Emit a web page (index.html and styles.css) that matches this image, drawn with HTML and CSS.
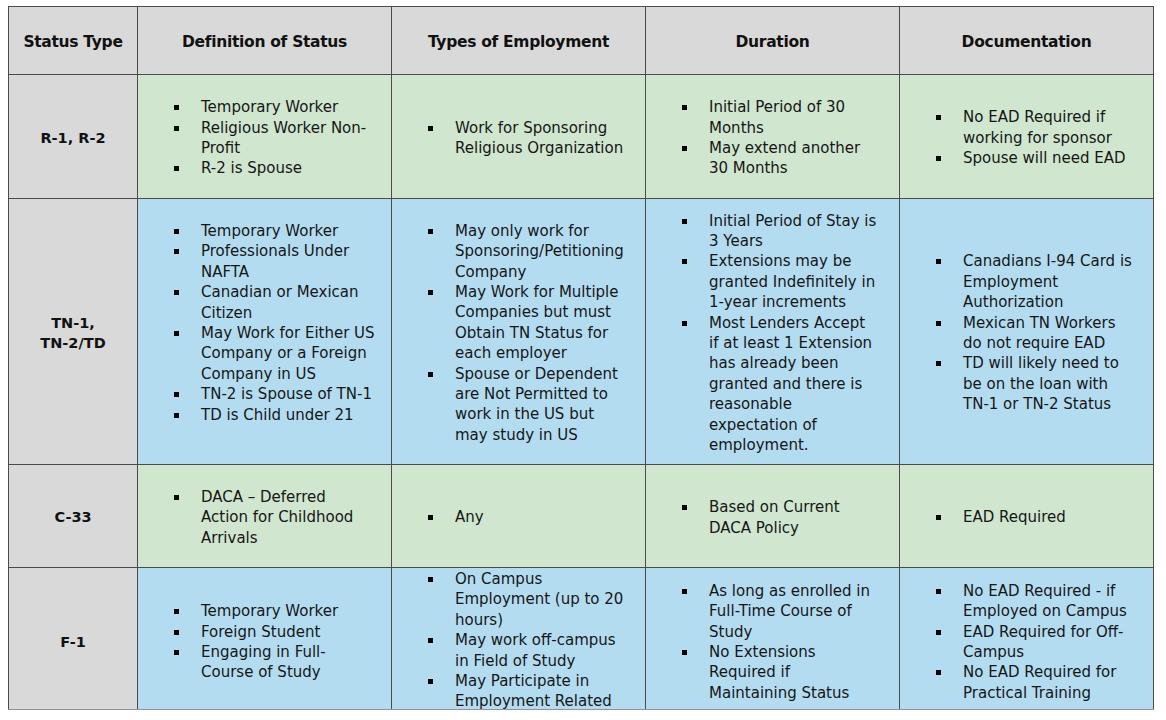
FILE: index.html
```html
<!DOCTYPE html>
<html lang="en">
<head>
<meta charset="utf-8">
<title>Immigration Status Types</title>
<link rel="stylesheet" href="styles.css">
</head>
<body>
<div class="table-clip">
  <div class="grid">
    <div class="cell head">Status Type</div>
    <div class="cell head">Definition of Status</div>
    <div class="cell head">Types of Employment</div>
    <div class="cell head">Duration</div>
    <div class="cell head">Documentation</div>

    <div class="cell label">R-1, R-2</div>
    <div class="cell green"><ul>
      <li><span>Temporary Worker</span></li>
      <li><span>Religious Worker Non-<br>Profit</span></li>
      <li><span>R-2 is Spouse</span></li>
    </ul></div>
    <div class="cell green"><ul>
      <li><span>Work for Sponsoring<br>Religious Organization</span></li>
    </ul></div>
    <div class="cell green"><ul>
      <li><span>Initial Period of 30<br>Months</span></li>
      <li><span>May extend another<br>30 Months</span></li>
    </ul></div>
    <div class="cell green"><ul>
      <li><span>No EAD Required if<br>working for sponsor</span></li>
      <li><span>Spouse will need EAD</span></li>
    </ul></div>

    <div class="cell label">TN-1,<br>TN-2/TD</div>
    <div class="cell blue cell-raised"><ul>
      <li><span>Temporary Worker</span></li>
      <li><span>Professionals Under<br>NAFTA</span></li>
      <li><span>Canadian or Mexican<br>Citizen</span></li>
      <li><span>May Work for Either US<br>Company or a Foreign<br>Company in US</span></li>
      <li><span>TN-2 is Spouse of TN-1</span></li>
      <li><span>TD is Child under 21</span></li>
    </ul></div>
    <div class="cell blue"><ul>
      <li><span>May only work for<br>Sponsoring/Petitioning<br>Company</span></li>
      <li><span>May Work for Multiple<br>Companies but must<br>Obtain TN Status for<br>each employer</span></li>
      <li><span>Spouse or Dependent<br>are Not Permitted to<br>work in the US but<br>may study in US</span></li>
    </ul></div>
    <div class="cell blue"><ul>
      <li><span>Initial Period of Stay is<br>3 Years</span></li>
      <li><span>Extensions may be<br>granted Indefinitely in<br>1-year increments</span></li>
      <li><span>Most Lenders Accept<br>if at least 1 Extension<br>has already been<br>granted and there is<br>reasonable<br>expectation of<br>employment.</span></li>
    </ul></div>
    <div class="cell blue"><ul>
      <li><span>Canadians I-94 Card is<br>Employment<br>Authorization</span></li>
      <li><span>Mexican TN Workers<br>do not require EAD</span></li>
      <li><span>TD will likely need to<br>be on the loan with<br>TN-1 or TN-2 Status</span></li>
    </ul></div>

    <div class="cell label">C-33</div>
    <div class="cell green"><ul>
      <li><span>DACA – Deferred<br>Action for Childhood<br>Arrivals</span></li>
    </ul></div>
    <div class="cell green"><ul>
      <li><span>Any</span></li>
    </ul></div>
    <div class="cell green"><ul>
      <li><span>Based on Current<br>DACA Policy</span></li>
    </ul></div>
    <div class="cell green"><ul>
      <li><span>EAD Required</span></li>
    </ul></div>

    <div class="cell label">F-1</div>
    <div class="cell blue"><ul>
      <li><span>Temporary Worker</span></li>
      <li><span>Foreign Student</span></li>
      <li><span>Engaging in Full-<br>Course of Study</span></li>
    </ul></div>
    <div class="cell blue cell-top"><ul>
      <li><span>On Campus<br>Employment (up to 20<br>hours)</span></li>
      <li><span>May work off-campus<br>in Field of Study</span></li>
      <li><span>May Participate in<br>Employment Related<br>Training</span></li>
    </ul></div>
    <div class="cell blue"><ul>
      <li><span>As long as enrolled in<br>Full-Time Course of<br>Study</span></li>
      <li><span>No Extensions<br>Required if<br>Maintaining Status</span></li>
    </ul></div>
    <div class="cell blue"><ul>
      <li><span>No EAD Required - if<br>Employed on Campus</span></li>
      <li><span>EAD Required for Off-<br>Campus</span></li>
      <li><span>No EAD Required for<br>Practical Training</span></li>
    </ul></div>
  </div>
</div>
</body>
</html>
```
FILE: styles.css
```css
html, body {
  margin: 0;
  background: #ffffff;
}

body {
  padding: 6px 0 0 8px;
  font-family: "DejaVu Sans", "Liberation Sans", sans-serif;
  color: #161616;
}

.table-clip {
  width: 1146px;
  height: 703px;
  overflow: hidden;
  border-bottom: 1px solid #8e949a;
}

.grid {
  display: grid;
  grid-template-columns: 128px repeat(4, 253px);
  grid-template-rows: 67px 123px 265px 102px 145px;
  gap: 1px;
  padding: 1px;
  background: #4b4b4b;
}

.cell {
  display: flex;
  flex-direction: column;
  justify-content: center;
  padding: 3px 6px 0 36px;
  font-size: 15px;
  line-height: 20.4px;
  white-space: nowrap;
  overflow: hidden;
}

.head {
  background: #d9d9d9;
  align-items: center;
  text-align: center;
  padding: 4px 0 0;
  font-size: 15.5px;
  font-weight: bold;
  letter-spacing: -0.3px;
  color: #111111;
}

.label {
  background: #d9d9d9;
  align-items: center;
  text-align: center;
  padding: 3px 0 0;
  font-weight: bold;
  font-size: 14.5px;
  color: #111111;
}

.green {
  background: #d0e6cf;
}

.blue {
  background: #b4dcf1;
}

.cell-raised {
  padding-bottom: 20px;
}

.cell-top {
  justify-content: flex-start;
  padding-top: 1px;
}

ul {
  list-style: none;
  margin: 0;
  padding: 0;
}

li {
  display: flex;
  align-items: flex-start;
}

li::before {
  content: "";
  flex: none;
  width: 5px;
  height: 5px;
  margin: 8px 22px 0 0;
  background: #000000;
}
```
